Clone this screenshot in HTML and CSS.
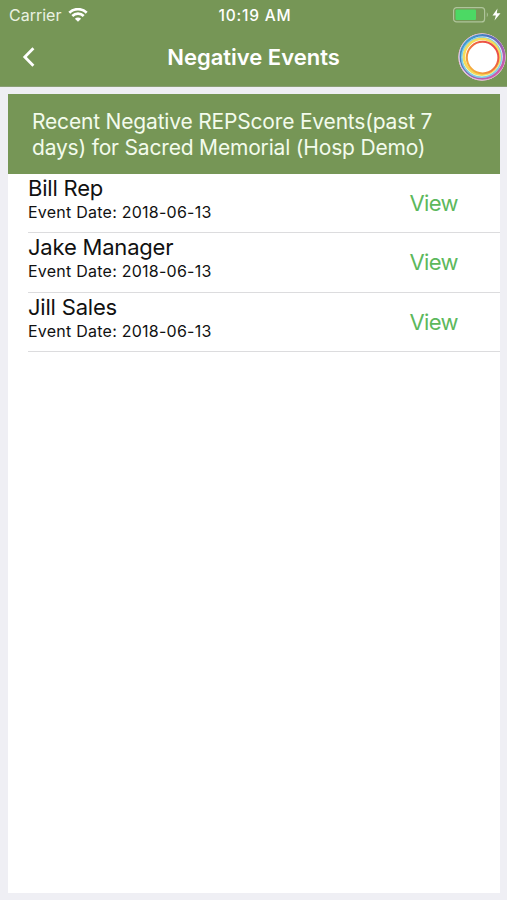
FILE: index.html
```
<!DOCTYPE html>
<html lang="en">
<head>
  <meta charset="UTF-8">
  <meta name="viewport" content="width=device-width, initial-scale=1.0">
  <title>Negative Events</title>
  <link rel="stylesheet" href="styles.css">
</head>
<body>
  <header>
    <div class="status-bar">
      <div class="carrier">
        <span>Carrier</span>
        <svg class="wifi" width="20" height="14" viewBox="0 0 20 14">
          <path d="M1.3 4.7a12.5 12.5 0 0 1 17.4 0M4.3 8a8.2 8.2 0 0 1 11.4 0" fill="none" stroke="#fff" stroke-width="2.7"/>
          <path d="M10 13.8L6.9 10.7a4.4 4.4 0 0 1 6.2 0z" fill="#fff"/>
        </svg>
      </div>
      <time class="clock">10:19 AM</time>
      <div class="power">
        <svg width="48" height="16" viewBox="0 0 48 16">
          <rect x=".6" y=".6" width="31" height="14.3" rx="3" fill="none" stroke="#afc49b" stroke-width="1.2"/>
          <rect x="2.5" y="2.5" width="20.5" height="10.5" rx="1" fill="#4cd964"/>
          <path d="M33.8 5.2q2.2 2.5 0 5z" fill="#afc49b"/>
          <path d="M44.5 1.5L39.5 8.5h3.4L41.5 13.5l6-7.2h-3.7z" fill="#fff"/>
        </svg>
      </div>
    </div>
    <nav class="nav-bar">
      <a class="back" href="#" aria-label="Back">
        <svg width="14" height="20" viewBox="0 0 14 20">
          <path d="M11.4 1.2L2.8 10l8.6 8.8" fill="none" stroke="#fff" stroke-width="2.8"/>
        </svg>
      </a>
      <h1>Negative Events</h1>
      <svg class="logo" width="50" height="50" viewBox="0 0 50 50">
        <defs>
          <linearGradient id="outer" x1="0" y1="0" x2="1" y2="1">
            <stop offset="0" stop-color="#43b9dc"/>
            <stop offset=".3" stop-color="#4678be"/>
            <stop offset=".6" stop-color="#9862b4"/>
            <stop offset="1" stop-color="#e75aaa"/>
          </linearGradient>
          <linearGradient id="inner" x1="1" y1="0" x2="0" y2="1">
            <stop offset="0" stop-color="#e93b4c"/>
            <stop offset=".5" stop-color="#f0713e"/>
            <stop offset="1" stop-color="#f5c43c"/>
          </linearGradient>
        </defs>
        <circle cx="25" cy="25" r="23.5" fill="#fff"/>
        <circle cx="25" cy="25" r="23.2" fill="none" stroke="#e9b3d6" stroke-width="1"/>
        <circle cx="25.4" cy="24.8" r="21.6" fill="none" stroke="url(#outer)" stroke-width="2.6"/>
        <circle cx="24.6" cy="25.4" r="19.8" fill="none" stroke="#7fd0e4" stroke-width="1.6"/>
        <circle cx="24.8" cy="24.8" r="17.8" fill="none" stroke="#f5dc5c" stroke-width="2.6"/>
        <circle cx="25.6" cy="25.6" r="15.8" fill="#fff" stroke="url(#inner)" stroke-width="2"/>
      </svg>
    </nav>
  </header>

  <main>
    <h2>Recent Negative REPScore Events(past 7<br>days) for Sacred Memorial (Hosp Demo)</h2>
    <ul class="events">
      <li>
        <div class="event">
          <h3>Bill Rep</h3>
          <p>Event Date: 2018-06-13</p>
        </div>
        <a class="view" href="#">View</a>
      </li>
      <li>
        <div class="event">
          <h3>Jake Manager</h3>
          <p>Event Date: 2018-06-13</p>
        </div>
        <a class="view" href="#">View</a>
      </li>
      <li>
        <div class="event">
          <h3>Jill Sales</h3>
          <p>Event Date: 2018-06-13</p>
        </div>
        <a class="view" href="#">View</a>
      </li>
    </ul>
  </main>
</body>
</html>
```
FILE: styles.css
```
* {
  box-sizing: border-box;
}
body {
  margin: 0;
  height: 900px;
  display: flex;
  flex-direction: column;
  background: #efeff4;
  color: #111;
  font-family: Inter, "Liberation Sans", sans-serif;
  overflow: hidden;
}
h1, h2, h3, p, ul {
  margin: 0;
  padding: 0;
  font-weight: 400;
}
a {
  text-decoration: none;
}
svg {
  display: block;
}
header {
  height: 87px;
  background: #769656;
  border-bottom: 1px solid #8a9f76;
  color: #fff;
}
.status-bar {
  display: grid;
  grid-template-columns: 1fr auto 1fr;
  align-items: center;
  height: 29px;
  padding: 0 6px 0 9px;
  font-size: 16px;
}
.carrier {
  display: flex;
  align-items: center;
  gap: 7px;
  color: #eaf2e2;
}
.clock {
  padding-top: 1px;
  font-weight: 500;
  font-size: 15.5px;
  letter-spacing: 0.8px;
}
.power {
  display: flex;
  justify-content: flex-end;
}
.nav-bar {
  display: grid;
  grid-template-columns: 1fr auto 1fr;
  align-items: center;
  height: 56px;
}
.back {
  margin-left: 22px;
}
.nav-bar h1 {
  font-size: 22px;
  font-weight: 600;
}
.logo {
  justify-self: end;
}
main {
  flex: 1;
  margin: 7px 7px 7px 8px;
  background: #fff;
}
main h2 {
  height: 80px;
  padding: 15px 24px 0;
  background: #769656;
  color: #f3fbec;
  font-size: 21px;
  line-height: 26px;
  letter-spacing: -0.18px;
  white-space: nowrap;
}
.events {
  list-style: none;
  padding-left: 20px;
}
.events li {
  display: flex;
  justify-content: space-between;
  height: 59.3px;
  padding-right: 42px;
  border-bottom: 1px solid #dcdcde;
}
.event h3 {
  font-size: 22px;
  line-height: 29px;
  letter-spacing: -0.2px;
}
.event p {
  font-size: 16px;
  line-height: 18px;
  letter-spacing: 0.24px;
}
.view {
  align-self: center;
  color: #5cb85c;
  font-size: 22px;
  letter-spacing: -0.6px;
}
```
